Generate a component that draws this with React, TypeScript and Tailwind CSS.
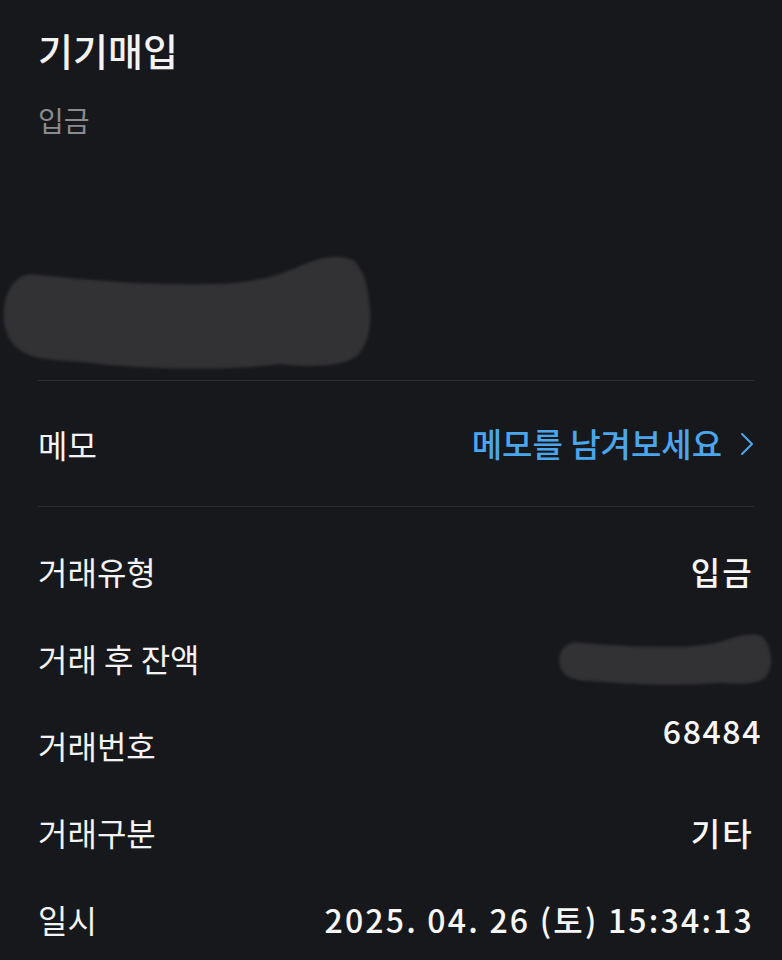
const FONT = "font-['Noto_Sans_CJK_KR','Noto_Sans',sans-serif]";

interface Row {
  label: string;
  value?: string;
  redacted?: boolean;
  raised?: boolean;
}

const rows: Row[] = [
  { label: "거래유형", value: "입금" },
  { label: "거래 후 잔액", redacted: true },
  { label: "거래번호", value: "68484", raised: true },
  { label: "거래구분", value: "기타" },
  { label: "일시", value: "2025. 04. 26 (토) 15:34:13" },
];

function BrushBlob({ className }: { className?: string }) {
  // brush-stroke redaction
  return (
    <svg viewBox="0 0 370 120" className={className} preserveAspectRatio="none">
      <path
        d="M4 60 C6 40 20 28 34 30 C80 34 140 40 220 38 C260 36 280 30 300 22 C320 14 340 12 352 18 C362 26 366 40 368 60 C370 78 364 92 356 100 C340 112 300 110 280 108 C220 114 150 112 100 108 C70 104 40 106 24 98 C10 92 2 78 4 60 Z"
        fill="#323235"
      />
    </svg>
  );
}

function App() {
  return (
    <div className={`w-[782px] h-[960px] overflow-hidden bg-[#17181c] ${FONT}`}>
      <div className="pl-[38px] pr-[28px]">
        <h1 className="pt-[28px] text-[38px] leading-[44px] font-medium text-[#f3f3f3]">
          기기매입
        </h1>
        <p className="mt-[32px] text-[28px] leading-[32px] text-[#8b8b8f]">입금</p>

        <div className="-ml-[38px] mt-[104px] h-[138px] w-[372px]">
          <BrushBlob className="w-full h-full blur-[1.5px]" />
        </div>

        <div className="mt-[2px] h-px bg-[#2e2f33]" />

        <div className="h-[125px] flex items-center justify-between">
          <span className="text-[32px] text-[#f3f3f3]">메모</span>
          <button className="flex items-center gap-[18px] text-[33px] font-medium text-[#4ba6ec]">
            메모를 남겨보세요
            <svg width="14" height="24" viewBox="0 0 14 24" fill="none">
              <polyline
                points="2,2 12,12 2,22"
                stroke="#4ba6ec"
                strokeWidth="2"
                strokeLinecap="round"
                strokeLinejoin="round"
              />
            </svg>
          </button>
        </div>

        <div className="h-px bg-[#2e2f33]" />

        <div className="pt-[20px]">
          {rows.map((row, index) => (
            <div key={index} className="h-[87px] flex items-center justify-between">
              <span className="text-[32px] text-[#f3f3f3]">{row.label}</span>
              {row.redacted ? (
                <div className="w-[215px] h-[62px] -mr-[18px]">
                  <BrushBlob className="w-full h-full blur-[1.5px]" />
                </div>
              ) : (
                <span
                  className={`text-[32px] font-medium text-[#f7f7f7] ${
                    row.raised ? "pb-[30px] -mr-[8px] tracking-[1.6px]" : "tracking-[2.2px]"
                  }`}
                >
                  {row.value}
                </span>
              )}
            </div>
          ))}
        </div>
      </div>
    </div>
  );
}

export default App;
